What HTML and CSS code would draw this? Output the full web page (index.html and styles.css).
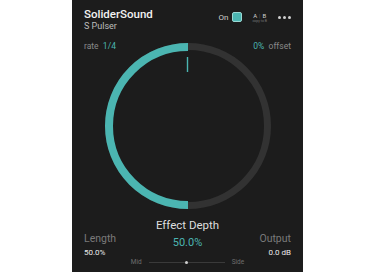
FILE: index.html
```html
<!DOCTYPE html>
<html>
<head>
<meta charset="utf-8">
<link rel="stylesheet" href="styles.css">
</head>
<body>
<div class="panel">
  <header class="header">
    <div class="brand">
      <div class="title">SoliderSound</div>
      <div class="subtitle">S Pulser</div>
    </div>
    <div class="controls">
      <span class="on-label">On</span>
      <span class="toggle"></span>
      <div class="ab">
        <div class="ab-main">A<span class="sep">|</span>B</div>
        <div class="ab-sub">copy to B</div>
      </div>
      <div class="dots"><i></i><i></i><i></i></div>
    </div>
  </header>
  <section class="knob">
    <div class="params">
      <div><span class="muted">rate</span>&nbsp; <span class="accent">1/4</span></div>
      <div><span class="accent">0%</span>&nbsp; <span class="muted">offset</span></div>
    </div>
    <svg class="ring" width="166" height="166" viewBox="0 0 166 166">
      <circle cx="83" cy="83" r="79.5" fill="none" stroke="#323232" stroke-width="7"/>
      <path d="M83 4 A79 79 0 0 0 83 162" fill="none" stroke="#4bb5b1" stroke-width="8"/>
      <line x1="82.5" y1="14" x2="82.5" y2="29" stroke="#4bb5b1" stroke-width="1.4"/>
    </svg>
  </section>
  <section class="bottom">
    <div class="side left">
      <div class="side-label">Length</div>
      <div class="side-value">50.0%</div>
    </div>
    <div class="center">
      <div class="depth-label">Effect Depth</div>
      <div class="depth-value">50.0%</div>
      <div class="slider">
        <span class="slider-end">Mid</span>
        <span class="track"><span class="thumb"></span></span>
        <span class="slider-end">Side</span>
      </div>
    </div>
    <div class="side right">
      <div class="side-label">Output</div>
      <div class="side-value">0.0 dB</div>
    </div>
  </section>
</div>
</body>
</html>
```

FILE: styles.css
```css
* { box-sizing: border-box; }
html, body { margin: 0; padding: 0; background: #ffffff; }
body { font-family: Roboto, "Liberation Sans", sans-serif; }

.panel {
  width: 231px;
  height: 272px;
  margin-left: 72px;
  background: #1c1c1c;
  padding: 7px 12px 0;
  display: flex;
  flex-direction: column;
  overflow: hidden;
}

.header {
  display: flex;
  justify-content: space-between;
  align-items: flex-start;
  height: 25px;
}
.title {
  color: #f2f2f2;
  font-size: 11.5px;
  font-weight: 500;
  line-height: 14px;
}
.subtitle {
  color: #bdbdbd;
  font-size: 9px;
  line-height: 11px;
}
.controls {
  display: flex;
  align-items: center;
  margin-top: 4px;
  height: 12px;
}
.on-label {
  color: #cfcfcf;
  font-size: 8px;
  margin-right: 3px;
}
.toggle {
  width: 10px;
  height: 10px;
  border-radius: 2px;
  background: #4bb5b1;
  border: 1px solid #9ad8d4;
  margin-right: 11px;
}
.ab {
  display: flex;
  flex-direction: column;
  align-items: center;
  margin-right: 11px;
}
.ab-main {
  color: #cfcfcf;
  font-size: 6px;
  line-height: 7px;
}
.ab-main .sep { color: #555; margin: 0 2px; }
.ab-sub {
  color: #777;
  font-size: 3.5px;
  line-height: 4px;
}
.dots { display: flex; gap: 2px; }
.dots i {
  width: 3px;
  height: 3px;
  border-radius: 50%;
  background: #d0d0d0;
}

.knob {
  display: grid;
  justify-items: center;
}
.knob > * { grid-area: 1 / 1; }
.params {
  justify-self: stretch;
  display: flex;
  justify-content: space-between;
  font-size: 8.5px;
  line-height: 10px;
  margin-top: 9px;
}
.muted { color: #8a8a8a; }
.accent { color: #4bb5b1; }
.ring {
  display: block;
  margin-top: 11px;
  margin-bottom: 9px;
}

.bottom {
  display: grid;
  grid-template-columns: 1fr auto 1fr;
}
.side { padding-top: 15px; }
.side.right { text-align: right; }
.side-label {
  color: #7a7a7a;
  font-size: 10.5px;
  line-height: 12px;
}
.side-value {
  color: #ececec;
  font-size: 8px;
  line-height: 10px;
  margin-top: 3px;
}
.center {
  display: flex;
  flex-direction: column;
  align-items: center;
}
.depth-label {
  color: #dedede;
  font-size: 11.5px;
  line-height: 14px;
}
.depth-value {
  color: #4bb5b1;
  font-size: 11px;
  line-height: 14px;
  margin-top: 4px;
}
.slider {
  display: flex;
  align-items: center;
  gap: 7px;
  margin-top: 7px;
  line-height: 10px;
}
.slider-end {
  color: #6e6e6e;
  font-size: 6.5px;
}
.track {
  width: 76px;
  height: 1px;
  background: #3a3a3a;
  display: flex;
  justify-content: center;
  align-items: center;
}
.thumb {
  width: 3px;
  height: 3px;
  border-radius: 50%;
  background: #cfcfcf;
}
```
